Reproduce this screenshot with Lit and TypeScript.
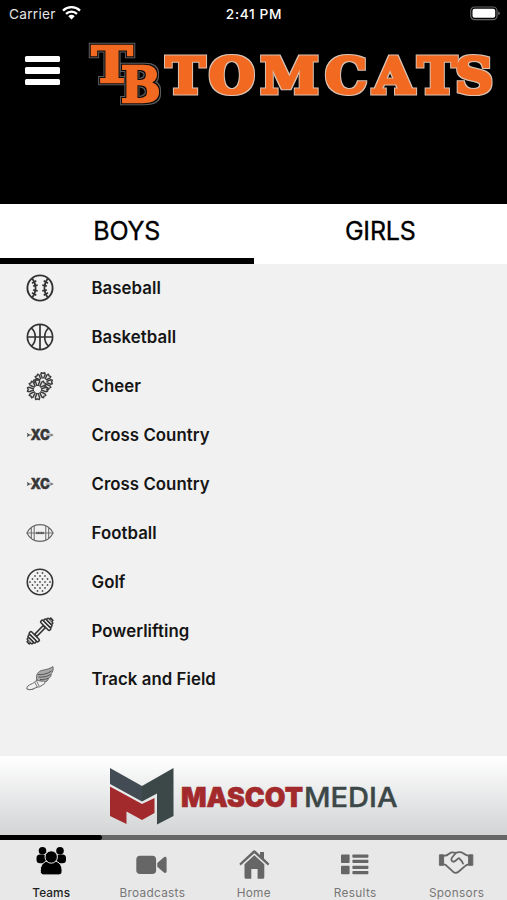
import { LitElement, html, svg, css } from "lit";
import { customElement, property } from "lit/decorators.js";
import { classMap } from "lit/directives/class-map.js";

const petals = (cx: number, cy: number, r: number) =>
  svg`<g transform="translate(${cx} ${cy})"><circle r="7" fill="#f1f1f1"/>${[0, 45, 90, 135, 180, 225, 270, 315].map(
    (a) => svg`<path transform="rotate(${a})" d="M-.5 -3.500 L-2.200 ${-r + 2.5} L-1.700 ${-r + .6} L0 ${-r + 1.4} L1.700 ${-r + .6} L2.200 ${-r + 2.5} L.5 -3.500" fill="#e4e4e4" stroke="#3a3a3a" stroke-width="1.400" stroke-linejoin="round"/>`
  )}</g>`;

const plates = svg`
  <rect x="-3.2" y="-6.3" width="3.2" height="12.6" rx="1.2"/>
  <rect x="0" y="-5" width="2.9" height="10" rx="1.2"/>
  <rect x="2.9" y="-3.6" width="2.4" height="7.2" rx="1"/>
  <path d="M5.3 -1.4h1.7v2.8H5.3"/>`;

const dots: [number, number][] = [];
[-9, -6, -3, 0, 3, 6, 9].forEach((y, j) => {
  for (let x = j % 2 ? -10 : -7.5; x <= 10; x += 5) {
    if (x * x + y * y < 115) dots.push([x, y]);
  }
});

const xc = svg`
  <path d="M.8 11.800l3.400 2.200L.8 16.200l.8-2.200z" fill="#444"/>
  <path d="M3 14h3" stroke="#777" stroke-width="1"/>
  <path d="M24.500 12.200l3.200 1.800-3.200 1.800z" fill="#777"/>
  <text x="4.600" y="19.300" textLength="19.400" lengthAdjust="spacingAndGlyphs" font-family="Inter, sans-serif" font-weight="900" font-size="14.800" fill="#383838" stroke="#383838" stroke-width=".3">XC</text>
  <path d="M19.500 14h7" stroke="#888" stroke-width="1"/>`;

const icons: Record<string, unknown> = {
  baseball: svg`<g fill="none" stroke="#333"><circle cx="14" cy="14" r="12.600" stroke-width="1.900"/>
    <path d="M6.200 4.400C9 8 9.600 11 9.600 14s-.6 6-3.400 9.600M21.800 4.400C19 8 18.400 11 18.400 14s.6 6 3.400 9.600" stroke-width="1.700"/>
    <path d="M6 9.200l4.300-2.500M7 12l4.700-.8M7 16l4.700.8M6 18.800l4.300 2.500M22 9.200l-4.300-2.500M21 12l-4.700-.8M21 16l-4.700.8M22 18.800l-4.300 2.500" stroke-width="1.700"/></g>`,
  basketball: svg`<g fill="none" stroke="#333" stroke-width="1.700"><circle cx="14" cy="14" r="12.600"/>
    <path d="M14 1.400v25.200M1.400 14h25.200M5.200 4.800C8 7 9.300 10.400 9.300 14S8 21 5.200 23.200M22.800 4.800C20 7 18.700 10.400 18.700 14s1.300 7 4.100 9.200"/></g>`,
  cheer: svg`${petals(17, 10, 10)}${petals(11.500, 17.500, 10.700)}`,
  xc,
  football: svg`<g fill="none" stroke="#666" stroke-width="1.200"><path d="M.9 14C4 7.800 8.600 5.600 14 5.600S24 7.800 27.100 14C24 20.200 19.400 22.400 14 22.400S4 20.200.9 14z"/>
    <path d="M5.300 9v10M8.200 7v14M19.800 7v14M22.700 9v10" stroke-width="1"/><path d="M1 14h26" stroke-width=".9"/><path d="M10 14h8M10.800 12.800v2.400M12.400 12.800v2.400M14 12.800v2.400M15.600 12.800v2.400M17.200 12.800v2.400" stroke="#555" stroke-width="1"/></g>`,
  golf: svg`<circle cx="14" cy="14" r="12.700" fill="none" stroke="#333" stroke-width="1.600"/>${dots.map(
    ([x, y]) => svg`<circle cx=${14 + x} cy=${14 + y} r=".9" fill="#555"/>`
  )}`,
  powerlifting: svg`<g fill="#f1f1f1" stroke="#333" stroke-width="1.550" transform="translate(14 14) rotate(-45)">
    <rect x="-6" y="-1.500" width="12" height="3"/>
    <g transform="translate(9.700 0)">${plates}</g><g transform="translate(-9.700 0) scale(-1 1)">${plates}</g></g>`,
  track: svg`<g fill="none" stroke="#666" stroke-width="1" stroke-linejoin="round">
    <path fill="#aaa" d="M10.800 15.200C9.700 9.500 12 6.200 16.500 5.300c4-.8 8-1.700 10.400-3.700.8 3-.2 5.300-1.700 7 .2 2.300-1 4-2.800 5-.5 2-2 3.200-3.900 3.400z"/>
    <path d="M12 9.500c4.500 .500 9-.5 13.500-3.500M12.500 12c4.500 .500 8.500-.3 12-2.500M14 14.500c3.500 .300 6-.2 8.500-1.500" stroke="#555"/>
    <path fill="#f1f1f1" d="M10.800 15c-1.600 2-3.500 3.200-6 4.300C2.700 20.200.8 21.500.7 23.700c1.700 1.600 5.700 1.200 8-.4 1.800-1.200 3.200-1.300 5-1.500l4.800-3.200c.6-1.300.2-2-.8-2.500-2.500.3-4.600-.2-6.900-1.100z"/>
    <path d="M8.800 17.300l2.500 4.800M10.300 15.600l3 5.800M1 24.200c3 .8 5.700.3 8.200-1.200" stroke="#777"/></g>`,
};

const tabIcons: Record<string, unknown> = {
  teams: svg`<g fill="#000"><circle cx="9.500" cy="7.800" r="3.800"/><circle cx="27" cy="7.800" r="3.800"/>
    <rect x="3.500" y="11.500" width="9.500" height="8.700" rx="3.500"/><rect x="23.500" y="11.500" width="9.500" height="8.700" rx="3.500"/>
    <path stroke="#e8e8e8" stroke-width="1" d="M12.700 18.500h11c3.500 1.500 5.400 4.500 5.400 9 0 2.900-1 4.400-3.500 4.400H10.800c-2.500 0-3.500-1.500-3.500-4.400 0-4.500 1.900-7.500 5.400-9z"/>
    <circle cx="18.200" cy="14" r="6.200" stroke="#e8e8e8" stroke-width="1"/></g>`,
  broadcasts: svg`<g fill="#666"><rect x="2.300" y="12.800" width="19.800" height="18.300" rx="3.800"/><path d="M23.300 20l6.300-5.500c1.500-1.200 3-.6 3 1v12.800c0 1.600-1.500 2.200-3 1l-6.300-5.500z"/></g>`,
  home: svg`<path fill="#666" d="M18.300 12.300L28.300 21.300V34.200Q28.300 35.700 26.800 35.700H21.600V26H15.300V35.700H10Q8.500 35.700 8.500 34.200V21.300zM18.300 7.300Q19 7.300 20 8.300L24 12V9H28V15.600L33.400 20.800 32 22.500 18.300 10.300 4.600 22.500 3.300 20.800 16.600 8.300Q17.600 7.300 18.300 7.300z"/>`,
  results: svg`<g fill="#666"><rect x="4" y="11.500" width="8.600" height="8.600" rx=".8"/><rect x="4" y="22.700" width="8.600" height="8.600" rx=".8"/>
    <rect x="15.400" y="11.500" width="16" height="3.200" rx=".7"/><rect x="15.400" y="16.800" width="16" height="3.200" rx=".7"/><rect x="15.400" y="22.700" width="16" height="3.200" rx=".7"/><rect x="15.400" y="28.100" width="16" height="3.200" rx=".7"/></g>`,
  sponsors: svg`<g transform="translate(.3 .3)" fill="none" stroke="#666" stroke-width="1.800" stroke-linejoin="round" stroke-linecap="round">
    <path fill="#666" d="M1.500 11.500h3.800v10.500H1.500zM30.700 11.500h3.800v10.500h-3.800z" stroke-width="1"/>
    <path d="M5.500 12.500c3 0 4-.8 5.700-2.300 1.300-1.200 3.500-1.300 6.200-.6 2.500-.9 5.300-1.100 7.300.2 1.700 1.300 3 2.600 6 2.700M5.500 21c2 .2 2.800 1 3.700 2.400l5.500 5c2 1.600 3.600 1.500 5.500.1l6.500-5.700c1.200-1.200 2.200-1.800 4-1.800"/>
    <path d="M17.500 9.700l-3.700 4.500c-1.400 1.800-.7 3.800 1 4.200 2.800.5 3.500-2.900 5.900-3.600 1.600 1.600 3.500 3.500 4 5.500"/></g>`,
};

@customElement("sport-row")
export class SportRow extends LitElement {
  @property() icon = "";
  @property() label = "";
  static styles = css`
    :host { display: flex; align-items: center; height: 48.875px; padding-left: 26px; }
    svg { width: 28px; height: 28px; flex: none; overflow: visible; }
    .label { margin: 0 0 0 37.500px; font: 600 16.800px/24px Inter, sans-serif; letter-spacing: .06px; color: #151515; }
  `;
  render() {
    return html`<svg viewBox="0 0 28 28">${icons[this.icon]}</svg><span class="label">${this.label}</span>`;
  }
}

@customElement("tab-item")
export class TabItem extends LitElement {
  @property() icon = "";
  @property() label = "";
  @property({ type: Boolean }) active = false;
  static styles = css`
    :host { flex: 1; display: flex; flex-direction: column; align-items: center; }
    svg { width: 36px; height: 36px; margin-top: 3px; overflow: visible; }
    .label { margin: 5.300px 0 0 .5px; font: 400 11.800px/18px Inter, sans-serif; letter-spacing: .3px; color: #777; white-space: nowrap; }
    .active { color: #222; font-weight: 500; letter-spacing: .1px; margin-left: 1px; }
  `;
  render() {
    return html`<svg viewBox="0 0 36 36">${tabIcons[this.icon]}</svg>
      <span class=${classMap({ label: true, active: this.active })}>${this.label}</span>`;
  }
}

@customElement("app-root")
export class AppRoot extends LitElement {
  static styles = css`
    :host { display: flex; flex-direction: column; width: 507px; height: 900px; overflow: hidden; background: #f1f1f1; font-family: Inter, sans-serif; }
    .head { height: 203.500px; flex: none; background: #000; color: #fff; }
    .status { display: grid; grid-template-columns: 1fr auto 1fr; align-items: center; height: 27px; padding: 0 7px 0 9px; font: 400 13.700px/20px Inter, sans-serif; color: #e4e4e4; }
    .carrier { display: flex; align-items: center; gap: 6px; letter-spacing: .25px; }
    .wifi { width: 19px; height: 15px; margin-top: -2px; }
    .time { font-weight: 500; color: #fff; letter-spacing: .65px; margin-left: -1px; }
    .battery { justify-self: end; width: 30px; height: 15px; }
    .brand { display: flex; padding: 8px 0 0 25px; }
    .menu { display: flex; flex-direction: column; gap: 5.500px; padding-top: 20.700px; width: 35px; }
    .bar { height: 6.200px; border-radius: 1.500px; background: #fff; }
    .logo { width: 420px; height: 76px; margin-left: 25px; overflow: visible; }
    .slab { font-family: "DejaVu Serif", serif; font-weight: 700; fill: #f26a21; stroke: #f26a21; }
    .switch { display: flex; height: 60.500px; flex: none; background: #fff; }
    .choice { flex: 1; box-sizing: border-box; padding-top: 11.500px; text-align: center; font: 400 25px/32px Inter, sans-serif; letter-spacing: -.2px; color: #000; -webkit-text-stroke: .35px #000; border-bottom: 6px solid transparent; }
    .selected { border-color: #000; }
    .list { flex: 1; }
    .sponsor { height: 79.500px; flex: none; background: linear-gradient(#fff, #d2d4d5); }
    .sponsor svg { display: block; width: 507px; height: 79px; }
    .track { height: 5px; flex: none; background: #666; }
    .thumb { width: 102px; height: 5px; border-radius: 0 3px 3px 0; background: #000; }
    .tabs { display: flex; height: 60px; flex: none; background: #e8e8e8; }
  `;

  private sports = [
    ["baseball", "Baseball"], ["basketball", "Basketball"], ["cheer", "Cheer"],
    ["xc", "Cross Country"], ["xc", "Cross Country"], ["football", "Football"],
    ["golf", "Golf"], ["powerlifting", "Powerlifting"], ["track", "Track and Field"],
  ];
  private tabs = [
    ["teams", "Teams"], ["broadcasts", "Broadcasts"], ["home", "Home"], ["results", "Results"], ["sponsors", "Sponsors"],
  ];

  render() {
    return html`
      <div class="head">
        <div class="status">
          <div class="carrier">Carrier
            <svg class="wifi" viewBox="0 0 19 15"><g fill="none" stroke="#fff" stroke-width="2.300"><path d="M1 5.600a12.300 12.300 0 0 1 17 0M4 8.900a8 8 0 0 1 11 0"/></g><path fill="#fff" d="M6.300 11.200a4.800 4.800 0 0 1 6.400 0L9.500 14.500z"/></svg>
          </div>
          <div class="time">2:41 PM</div>
          <svg class="battery" viewBox="0 0 30 15"><rect x=".7" y="1" width="26.300" height="12.600" rx="3.800" fill="none" stroke="#666" stroke-width="1.200"/><rect x="2.500" y="2.800" width="22.700" height="9" rx="2" fill="#fff"/><path d="M28.300 5.300q3 2 0 4z" fill="#777"/></svg>
        </div>
        <div class="brand">
          <div class="menu"><div class="bar"></div><div class="bar"></div><div class="bar"></div></div>
          <svg class="logo" viewBox="0 0 420 76">
            <defs>
              <filter id="double" x="-20%" y="-20%" width="140%" height="140%" color-interpolation-filters="sRGB">
                <feMorphology in="SourceAlpha" operator="dilate" radius="2" result="far"/>
                <feFlood flood-color="#5c5c5c"/><feComposite in2="far" operator="in" result="rim"/>
                <feMorphology in="SourceAlpha" operator="dilate" radius="1" result="near"/>
                <feFlood flood-color="#0a0a0a"/><feComposite in2="near" operator="in" result="gap"/>
                <feMerge><feMergeNode in="rim"/><feMergeNode in="gap"/><feMergeNode in="SourceGraphic"/></feMerge>
              </filter>
              <filter id="single" x="-5%" y="-10%" width="110%" height="120%" color-interpolation-filters="sRGB">
                <feMorphology in="SourceAlpha" operator="dilate" radius="1" result="near"/>
                <feFlood flood-color="#d8c3b5"/><feComposite in2="near" operator="in" result="rim"/>
                <feMerge><feMergeNode in="rim"/><feMergeNode in="SourceGraphic"/></feMerge>
              </filter>
            </defs>
            <text class="slab" filter="url(#double)" x="6.500" y="46.500" textLength="41" lengthAdjust="spacingAndGlyphs" font-size="49" stroke-width="2.400">T</text>
            <text class="slab" filter="url(#double)" x="36" y="66.500" textLength="39.500" lengthAdjust="spacingAndGlyphs" font-size="49" stroke-width="2.400">B</text>
            <text class="slab" filter="url(#single)" transform="scale(1.07 1)" x="75.800 116 164 224.600 269.500 311 346" y="58" font-size="49" stroke-width="3">TOMCATS</text>
          </svg>
        </div>
      </div>
      <div class="switch"><div class="choice selected">BOYS</div><div class="choice">GIRLS</div></div>
      <div class="list">${this.sports.map(([icon, label]) => html`<sport-row icon=${icon} label=${label}></sport-row>`)}</div>
      <div class="sponsor">
        <svg viewBox="0 0 507 79">
          <path fill="#434c55" d="M110 12L142 30V45.500L110 28z"/>
          <path fill="#3c4747" d="M142 30L173.500 12V60L157 68.500V37.500L142 45.500z"/>
          <path fill="#a32a2c" d="M110 30.500L142 48 154.500 42V57L142 64 126.500 55.500V68L110 60z"/>
          <text x="181" y="50.500" textLength="122" lengthAdjust="spacingAndGlyphs" font-family="Inter, sans-serif" font-weight="900" font-size="27.500" fill="#a32a2c" stroke="#a32a2c" stroke-width=".6">MASCOT</text>
          <text x="304" y="50.500" textLength="93.500" lengthAdjust="spacingAndGlyphs" font-family="Inter, sans-serif" font-weight="500" font-size="27.500" fill="#3c4747" stroke="#3c4747" stroke-width=".4">MEDIA</text>
        </svg>
      </div>
      <div class="track"><div class="thumb"></div></div>
      <div class="tabs">${this.tabs.map(([icon, label], i) => html`<tab-item icon=${icon} label=${label} ?active=${i === 0}></tab-item>`)}</div>
    `;
  }
}
